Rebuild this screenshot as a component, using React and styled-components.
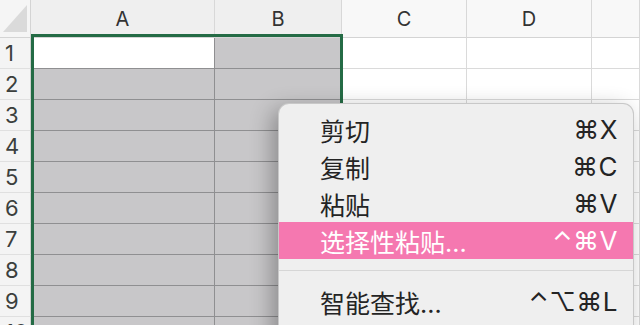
import React from 'react';
import styled, { createGlobalStyle } from 'styled-components';

const GlobalStyle = createGlobalStyle`
  html, body {
    margin: 0;
    padding: 0;
    width: 640px;
    height: 325px;
    overflow: hidden;
    background: #fff;
  }
  body {
    font-family: Inter, "Noto Sans CJK SC", "DejaVu Sans", sans-serif;
  }
`;

const columns = [
  { name: 'A', width: 184, selected: true },
  { name: 'B', width: 127, selected: true },
  { name: 'C', width: 125 },
  { name: 'D', width: 125 },
  { name: '', width: 48 },
];

const rows = [1, 2, 3, 4, 5, 6, 7, 8, 9, 10];

const menuItems = [
  { label: '剪切', keys: '⌘X' },
  { label: '复制', keys: '⌘C' },
  { label: '粘贴', keys: '⌘V' },
  { label: '选择性粘贴...', keys: '⌃⌘V', active: true },
  { separator: true },
  { label: '智能查找...', keys: '⌃⌥⌘L' },
  { label: '同义词库...', keys: '', disabled: true },
];

const Page = styled.div`
  position: relative;
  width: 640px;
  height: 325px;
  overflow: hidden;
`;

const Sheet = styled.div`
  display: grid;
  grid-template-columns: 31px ${columns.map((c) => `${c.width}px`).join(' ')};
  grid-auto-rows: 31px;
  grid-template-rows: 38px;
`;

const Corner = styled.div`
  background: #f5f5f5;
  border-right: 1px solid #d4d4d4;
  border-bottom: 1px solid #d4d4d4;
  display: flex;
  align-items: flex-end;
  justify-content: flex-end;
  padding: 0 3px 5px 0;
  box-sizing: border-box;
`;

const ColHeader = styled.div`
  display: flex;
  align-items: center;
  justify-content: center;
  background: ${(p) => (p.$selected ? '#efefef' : '#f8f8f8')};
  border-right: 1px solid #d8d8d8;
  border-bottom: 1px solid #d4d4d4;
  color: #333;
  font-size: 20px;
  box-sizing: border-box;
`;

const RowHeader = styled.div`
  display: flex;
  align-items: center;
  justify-content: flex-start;
  padding-left: 5px;
  background: #f4f4f4;
  border-right: 1px solid #d0d0d0;
  border-bottom: 1px solid #e0e0e0;
  color: #3b3f3d;
  font-size: 22px;
  box-sizing: border-box;
`;

const Cell = styled.div`
  background: ${(p) => (p.$active ? '#fff' : p.$selected ? '#c8c7c9' : '#fff')};
  border-right: 1px solid ${(p) => (p.$selected ? '#8f8f91' : '#dadada')};
  border-bottom: 1px solid ${(p) => (p.$selected ? '#8f8f91' : '#dadada')};
  box-sizing: border-box;
`;

const Selection = styled.div`
  position: absolute;
  left: 31px;
  top: 34px;
  width: 312px;
  height: 320px;
  border: 3px solid #246b45;
  box-sizing: border-box;
  pointer-events: none;
`;

const Menu = styled.div`
  position: absolute;
  left: 278px;
  top: 103px;
  width: 356px;
  padding: 7px 0;
  background: #efefef;
  border: 1px solid rgba(0, 0, 0, 0.16);
  border-radius: 11px;
  box-shadow: -6px 6px 22px rgba(0, 0, 0, 0.3);
  box-sizing: border-box;
`;

const Item = styled.div`
  display: flex;
  align-items: center;
  justify-content: space-between;
  height: 37px;
  padding: 0 15px 0 41px;
  font-size: 25px;
  color: ${(p) => (p.$active ? '#fff' : p.$disabled ? '#b4b4b4' : '#242424')};
  background: ${(p) => (p.$active ? '#f578b0' : 'transparent')};
`;

const Keys = styled.span`
  font-family: Inter, "DejaVu Sans", sans-serif;
  font-size: 26px;
  letter-spacing: 0.5px;
`;

const Separator = styled.div`
  height: 1px;
  margin: 11px 0 12px;
  background: #d6d6d6;
`;

const CornerMark = () => (
  <svg width="24" height="27" viewBox="0 0 24 27">
    <polygon points="24,0 24,27 0,27" fill="#dadada" />
  </svg>
);

export default function App() {
  return (
    <Page>
      <GlobalStyle />
      <Sheet>
        <Corner>
          <CornerMark />
        </Corner>
        {columns.map((c, i) => (
          <ColHeader key={i} $selected={c.selected}>
            {c.name}
          </ColHeader>
        ))}
        {rows.map((r) => (
          <React.Fragment key={r}>
            <RowHeader>{r}</RowHeader>
            {columns.map((c, i) => (
              <Cell
                key={i}
                $selected={c.selected}
                $active={r === 1 && c.name === 'A'}
              />
            ))}
          </React.Fragment>
        ))}
      </Sheet>
      <Selection />
      <Menu>
        {menuItems.map((m, i) =>
          m.separator ? (
            <Separator key={i} />
          ) : (
            <Item key={i} $active={m.active} $disabled={m.disabled}>
              <span>{m.label}</span>
              <Keys>{m.keys}</Keys>
            </Item>
          )
        )}
      </Menu>
    </Page>
  );
}
